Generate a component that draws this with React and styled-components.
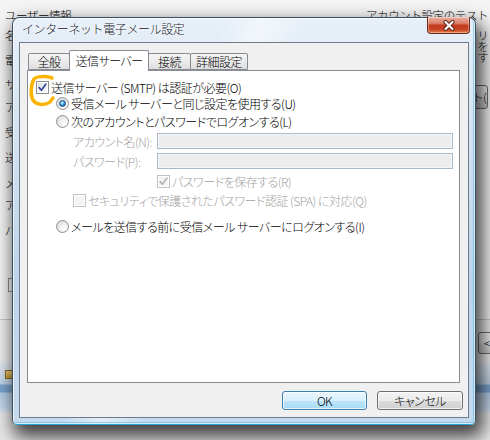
import styled, { createGlobalStyle } from "styled-components";

const GlobalStyle = createGlobalStyle`
  html, body {
    margin: 0;
    padding: 0;
  }
  body {
    background: #e6e6e6;
    font-family: "Noto Sans CJK JP", "Liberation Sans", sans-serif;
  }
`;

const Stage = styled.div`
  position: relative;
  width: 490px;
  height: 440px;
  overflow: hidden;
  background: #e8e8e8;
  font-family: "Noto Sans CJK JP", "Liberation Sans", sans-serif;
  font-size: 11.5px;
  font-weight: 300;
  letter-spacing: -0.4px;
  color: #000;
`;

/* ---- window behind the dialog ---- */

const BackWindow = styled.div`
  display: flex;
  flex-direction: column;
  height: 413px;
`;

const BackBody = styled.div`
  display: grid;
  grid-template-columns: 361px 1fr;
  height: 320px;
  padding-left: 5px;
  box-sizing: border-box;
  background: #f4f4f4;
  border-bottom: 1px solid #c8c8c8;
`;

const BackColumn = styled.div`
  display: flex;
  flex-direction: column;
  min-width: 0;
`;

const BackHeading = styled.div`
  height: 23px;
  padding-top: 7px;
  box-sizing: border-box;
  line-height: 16px;
  white-space: nowrap;
`;

const BackLabel = styled.div`
  height: 16px;
  line-height: 16px;
  margin-top: ${(p) => p.$mt}px;
  white-space: nowrap;
`;

const BackCheck = styled.div`
  width: 12px;
  height: 12px;
  margin: 40px 0 0 3px;
  border: 1px solid #8f8f8f;
  background: #f7f7f7;
`;

const NoteBlock = styled.div`
  margin-top: 7px;
  width: 122px;
  text-align: right;
  font-size: 11px;
  line-height: 11px;
  white-space: nowrap;
`;

const TestButton = styled.div`
  margin: 22px 0 0 -8px;
  width: 130px;
  height: 24px;
  box-sizing: border-box;
  padding-left: 2px;
  border: 1px solid #707070;
  border-radius: 3px;
  background: linear-gradient(#f2f2f2 0%, #ebebeb 50%, #dddddd 51%, #cfcfcf 100%);
  line-height: 22px;
  white-space: nowrap;
  overflow: hidden;
`;

const BackFooter = styled.div`
  display: flex;
  gap: 6px;
  height: 42px;
  box-sizing: border-box;
  padding: 12px 0 0 478px;
  background: #ededed;
  overflow: hidden;
`;

const BackButton = styled.div`
  flex-shrink: 0;
  width: 75px;
  height: 22px;
  box-sizing: border-box;
  border: 1px solid #707070;
  border-radius: 3px;
  background: linear-gradient(#f2f2f2 0%, #ebebeb 50%, #dddddd 51%, #cfcfcf 100%);
  line-height: 20px;
  padding-left: 5px;
  white-space: nowrap;
`;

const BackFrame = styled.div`
  flex: 1;
  padding: 8px 0 0 5px;
  box-sizing: border-box;
  background: linear-gradient(
    180deg,
    #e3eaf2 0px,
    #d5e1ed 10px,
    #bfd3e8 22px,
    #7fa8d2 23px,
    #7aa3cf 30px,
    #b4cde8 31px,
    #c8daee 46px,
    #dfe6ee 51px
  );
`;

const StatusIcon = styled.div`
  width: 6px;
  height: 7px;
  border: 1px solid #8a6d1e;
  background: linear-gradient(#f0d27a, #c79c2e);
`;

/* ---- the dialog ---- */

const Dialog = styled.div`
  position: absolute;
  left: 12px;
  top: 17px;
  width: 464px;
  height: 408px;
  box-sizing: border-box;
  display: flex;
  flex-direction: column;
  border: 1px solid #3d5163;
  border-bottom-color: #2a9fd6;
  border-radius: 7px 7px 5px 5px;
  background:
    linear-gradient(112deg, rgba(255, 255, 255, 0) 34%, rgba(255, 255, 255, 0.5) 40%, rgba(255, 255, 255, 0) 47%),
    linear-gradient(180deg, #e8f0f8 0%, #d6e4f1 25%, #bcd3ea 65%, #c6daee 100%);
  box-shadow:
    inset 0 0 0 1px rgba(255, 255, 255, 0.65),
    inset -1px -1px 0 1px rgba(60, 170, 225, 0.45),
    4px 9px 18px 3px rgba(0, 0, 0, 0.72);
`;

const TitleBar = styled.div`
  display: flex;
  align-items: flex-start;
  height: 24px;
  padding-left: 9px;
`;

const Title = styled.div`
  font-size: 12px;
  line-height: 22px;
  color: #16162a;
  text-shadow: 0 0 6px rgba(255, 255, 255, 0.95), 0 0 2px rgba(255, 255, 255, 0.9);
  white-space: nowrap;
`;

const CloseButton = styled.div`
  display: flex;
  align-items: center;
  justify-content: center;
  margin: -1px 5px 0 auto;
  width: 43px;
  height: 17px;
  box-sizing: border-box;
  border: 1px solid #6b2a1d;
  border-top: none;
  border-radius: 0 0 4px 4px;
  background: linear-gradient(
    180deg,
    #eab3a4 0%,
    #d97e68 40%,
    #c33a1f 52%,
    #c84626 78%,
    #e5804c 100%
  );
  box-shadow: inset 0 0 0 1px rgba(255, 255, 255, 0.35);
`;

const Client = styled.div`
  flex: 1;
  display: flex;
  flex-direction: column;
  margin: 0 6px 6px;
  padding: 7px 8px 7px 7px;
  border: 1px solid #6c7d8f;
  background: #f0f0f0;
  font-size: 12px;
  letter-spacing: -0.5px;
  font-feature-settings: "palt" 1;
`;

const TabRow = styled.div`
  display: flex;
  align-items: flex-end;
  height: 20px;
  padding-left: 1px;
`;

const Tab = styled.div`
  position: relative;
  z-index: ${(p) => (p.$active ? 1 : 0)};
  display: flex;
  align-items: center;
  justify-content: center;
  width: ${(p) => p.$w}px;
  height: ${(p) => (p.$active ? 21 : 17)}px;
  margin: 0 -1px ${(p) => (p.$active ? -1 : 0)}px 0;
  box-sizing: border-box;
  border: 1px solid #898c95;
  border-bottom: ${(p) => (p.$active ? "none" : "1px solid #898c95")};
  border-radius: 2px 2px 0 0;
  background: ${(p) =>
    p.$active ? "#ffffff" : "linear-gradient(#f5f5f5 0%, #ebebeb 50%, #dedede 100%)"};
  padding-bottom: ${(p) => (p.$active ? 2 : 0)}px;
  white-space: nowrap;
`;

const Panel = styled.div`
  flex: 1;
  display: flex;
  flex-direction: column;
  padding: 8px 6px 0 8px;
  border: 1px solid #898c95;
  background: #ffffff;
`;

const Row = styled.div`
  display: flex;
  align-items: center;
  height: 16px;
  margin-top: ${(p) => p.$mt || 0}px;
  padding-left: ${(p) => p.$indent || 0}px;
  color: ${(p) => (p.$disabled ? "#a2a2a2" : "#000")};
  white-space: nowrap;
`;

const FieldLabel = styled.span`
  width: 84px;
  flex-shrink: 0;
`;

const TextBox = styled.div`
  flex: 1;
  height: 16px;
  box-sizing: border-box;
  border: 1px solid #a9bacc;
  background: #ededed;
  box-shadow: inset 0 0 0 1px #f6f6f6;
`;

const CheckBox = styled.span`
  position: relative;
  flex-shrink: 0;
  width: 13px;
  height: 13px;
  margin-right: 2px;
  box-sizing: border-box;
  border: 1px solid ${(p) => (p.$disabled ? "#c2c2c2" : "#8e8f8f")};
  background: ${(p) =>
    p.$disabled
      ? "#f4f4f4"
      : "linear-gradient(135deg, #d9dbde 0%, #eef0f2 55%, #fbfbfb 100%)"};
  box-shadow: inset 0 0 0 1px #ffffff;

  svg {
    position: absolute;
    left: 0;
    top: 0;
  }
`;

const RadioDot = styled.span`
  display: flex;
  align-items: center;
  justify-content: center;
  flex-shrink: 0;
  width: 13px;
  height: 13px;
  margin-right: 2px;
  box-sizing: border-box;
  border-radius: 50%;
  border: 1px solid #8e8f8f;
  background: radial-gradient(circle at 65% 70%, #ffffff 0%, #f0f0f0 40%, #cfd1d4 100%);

  &::after {
    content: "";
    display: ${(p) => (p.$checked ? "block" : "none")};
    width: 7px;
    height: 7px;
    box-sizing: border-box;
    border-radius: 50%;
    border: 1px solid #1c4a7c;
    background: radial-gradient(circle at 40% 35%, #d8f6ff 0%, #55b5ea 40%, #1664b4 75%, #0c3f7e 100%);
  }
`;

const ButtonRow = styled.div`
  display: flex;
  justify-content: flex-end;
  gap: 10px;
  margin: 8px -3px 0 0;
`;

const DialogButton = styled.div`
  display: flex;
  align-items: center;
  justify-content: center;
  width: ${(p) => p.$w}px;
  height: 19px;
  box-sizing: border-box;
  border: 1px solid ${(p) => (p.$primary ? "#3c7fb1" : "#707070")};
  border-radius: 3px;
  background: ${(p) =>
    p.$primary
      ? "linear-gradient(#eaf6fd 0%, #d9f0fc 50%, #bee6fd 51%, #a7d9f5 100%)"
      : "linear-gradient(#f2f2f2 0%, #ebebeb 50%, #dddddd 51%, #cfcfcf 100%)"};
  box-shadow: inset 0 0 0 1px rgba(255, 255, 255, 0.7);
  white-space: nowrap;
`;

const Annotation = styled.svg`
  position: absolute;
  left: 28px;
  top: 72px;
  pointer-events: none;
`;

const Check = ({ disabled }) => (
  <svg width="11" height="11" viewBox="0 0 11 11">
    <path
      d="M2.2 5.6 L4.4 8.2 L8.8 2.2"
      fill="none"
      stroke={disabled ? "#b4b4b4" : "#34469c"}
      strokeWidth="1.7"
      strokeLinecap="round"
      strokeLinejoin="round"
    />
  </svg>
);

const Box = ({ checked, disabled }) => (
  <CheckBox $disabled={disabled}>{checked && <Check disabled={disabled} />}</CheckBox>
);

const backLabels = [
  { mt: 4, text: "名前(Y):" },
  { mt: 9, text: "電子メール アドレス(E):" },
  { mt: 8, text: "サーバー情報" },
  { mt: 7, text: "アカウントの種類(A):" },
  { mt: 9, text: "受信メール サーバー(I):" },
  { mt: 9, text: "送信メール サーバー (SMTP)(O):" },
  { mt: 10, text: "メール サーバーへのログオン情報" },
  { mt: 6, text: "アカウント名(U):" },
  { mt: 9, text: "パスワード(P):" },
];

const tabs = [
  { label: "全般", w: 42 },
  { label: "送信サーバー", w: 80, active: true },
  { label: "接続", w: 43 },
  { label: "詳細設定", w: 58 },
];

const App = () => {
  return (
    <>
      <GlobalStyle />
      <Stage>
        <BackWindow>
          <BackBody>
            <BackColumn>
              <BackHeading>ユーザー情報</BackHeading>
              {backLabels.map((l) => (
                <BackLabel key={l.text} $mt={l.mt}>
                  {l.text}
                </BackLabel>
              ))}
              <BackCheck />
            </BackColumn>
            <BackColumn>
              <BackHeading>アカウント設定のテスト</BackHeading>
              <NoteBlock>
                <div>進むにはボタンをクリ</div>
                <div>アカウントのテストを</div>
                <div>お勧めします</div>
              </NoteBlock>
              <TestButton>アカウント設定のテスト(T)...</TestButton>
            </BackColumn>
          </BackBody>
          <BackFooter>
            <BackButton>&lt; 戻る(B)</BackButton>
          </BackFooter>
          <BackFrame>
            <StatusIcon />
          </BackFrame>
        </BackWindow>

        <Dialog>
          <TitleBar>
            <Title>インターネット電子メール設定</Title>
            <CloseButton>
              <svg width="14" height="11" viewBox="0 0 14 11">
                <path d="M3.5 2 L10.5 9 M10.5 2 L3.5 9" stroke="#5a1c12" strokeWidth="4" strokeLinecap="round" />
                <path d="M3.5 2 L10.5 9 M10.5 2 L3.5 9" stroke="#ffffff" strokeWidth="2.2" strokeLinecap="round" />
              </svg>
            </CloseButton>
          </TitleBar>
          <Client>
            <TabRow>
              {tabs.map((t) => (
                <Tab key={t.label} $w={t.w} $active={t.active}>
                  {t.label}
                </Tab>
              ))}
            </TabRow>
            <Panel>
              <Row>
                <Box checked />
                送信サーバー (SMTP) は認証が必要(O)
              </Row>
              <Row $indent={20}>
                <RadioDot $checked />
                受信メール サーバーと同じ設定を使用する(U)
              </Row>
              <Row $indent={20} $mt={2}>
                <RadioDot />
                次のアカウントとパスワードでログオンする(L)
              </Row>
              <Row $indent={37} $mt={4} $disabled>
                <FieldLabel>アカウント名(N):</FieldLabel>
                <TextBox />
              </Row>
              <Row $indent={37} $mt={4} $disabled>
                <FieldLabel>パスワード(P):</FieldLabel>
                <TextBox />
              </Row>
              <Row $indent={121} $mt={4} $disabled>
                <Box checked disabled />
                パスワードを保存する(R)
              </Row>
              <Row $indent={37} $mt={3} $disabled>
                <Box disabled />
                セキュリティで保護されたパスワード認証 (SPA) に対応(Q)
              </Row>
              <Row $indent={20} $mt={10}>
                <RadioDot />
                メールを送信する前に受信メール サーバーにログオンする(I)
              </Row>
            </Panel>
            <ButtonRow>
              <DialogButton $w={85} $primary>
                OK
              </DialogButton>
              <DialogButton $w={86}>キャンセル</DialogButton>
            </ButtonRow>
          </Client>
        </Dialog>

        <Annotation width="30" height="38" viewBox="0 0 30 38">
          <path
            d="M24 6 C18 4, 9 4, 6 7 C3 12, 2 23, 5 28 C8 33, 17 34, 22 30 L25 26"
            fill="none"
            stroke="#fbb400"
            strokeWidth="3.5"
            strokeLinecap="round"
            strokeLinejoin="round"
          />
        </Annotation>
      </Stage>
    </>
  );
};

export default App;
